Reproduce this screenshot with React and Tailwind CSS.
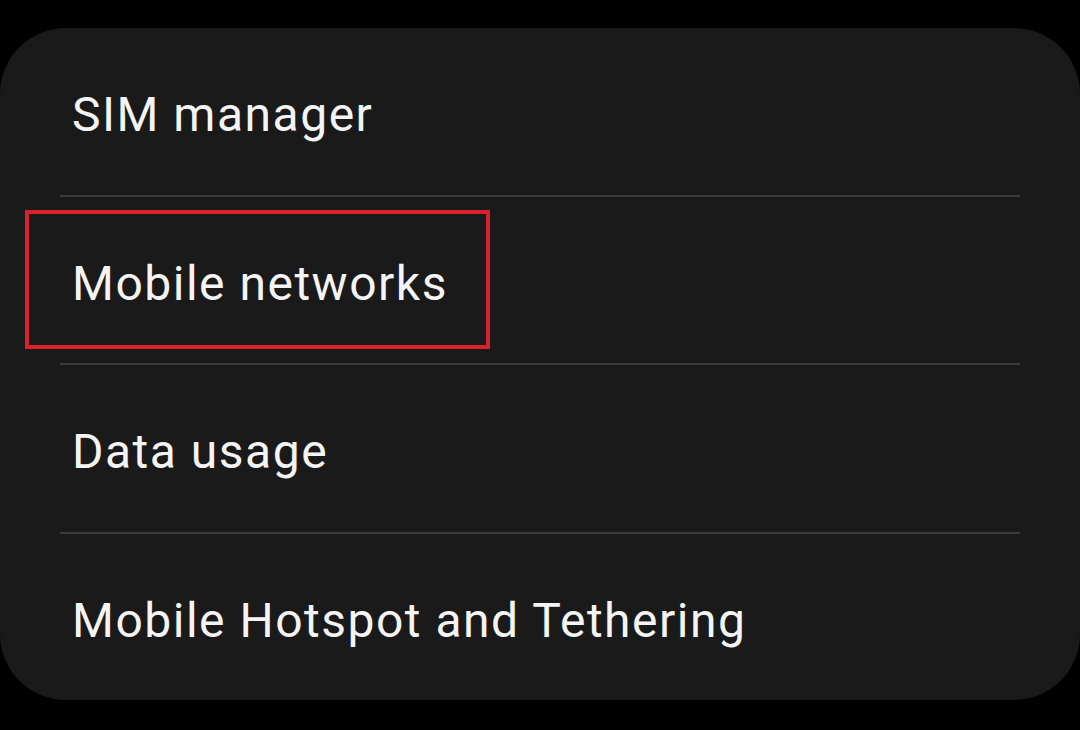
import React from "react";

const items = ["SIM manager", "Mobile networks", "Data usage", "Mobile Hotspot and Tethering"];

const App = () => {
    return (
        <div className="w-[1080px] h-[730px] bg-black pt-[28px] overflow-hidden" style={{ fontFamily: "Roboto, 'Noto Sans', sans-serif" }}>
            <div className="h-[672px] bg-[#1a1a1a] rounded-[66px] flex flex-col">
                {items.map((label, i) => (
                    <React.Fragment key={label}>
                        {i > 0 && <div className="mx-[60px] h-[2px] bg-[#3c3c3c]"></div>}
                        <div className="relative flex-1 flex items-center pl-[72px]">
                            <span className="text-[48px] leading-none tracking-[1.5px] text-[#f4f4f4] pt-[8px]">{label}</span>
                            {label === "Mobile networks" && (
                                <div className="absolute left-[25px] top-[13px] w-[465px] h-[139px] border-[4px] border-[#d8232f]"></div>
                            )}
                        </div>
                    </React.Fragment>
                ))}
            </div>
        </div>
    );
};

export default App;
